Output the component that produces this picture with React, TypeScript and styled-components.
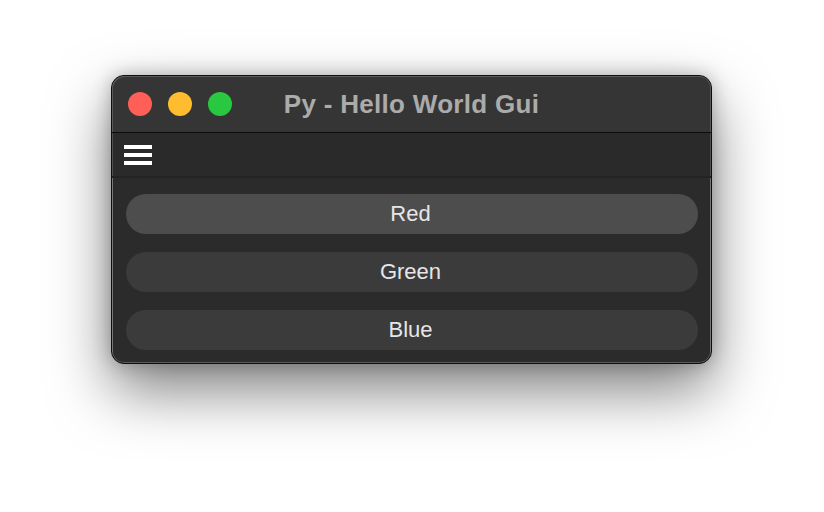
import React from "react";
import styled, { createGlobalStyle } from "styled-components";

const Global = createGlobalStyle`
  html, body { margin: 0; padding: 0; background: #ffffff; }
  body { font-family: "Liberation Sans", Arial, sans-serif; }
`;

const Page = styled.div`
  width: 824px;
  height: 512px;
  display: flex;
  justify-content: flex-start;
  align-items: flex-start;
  padding: 75px 0 0 111px;
  box-sizing: border-box;
  overflow: hidden;
`;

const Window = styled.div`
  width: 601px;
  height: 289px;
  box-sizing: border-box;
  border: 1px solid #0e0e0e;
  border-radius: 13px;
  background: #2b2b2b;
  overflow: hidden;
  display: flex;
  flex-direction: column;
  box-shadow: inset 0 0 0 1px rgba(255, 255, 255, 0.22), 0 26px 60px rgba(0, 0, 0, 0.5),
    0 0 18px rgba(0, 0, 0, 0.25);
`;

const TitleBar = styled.div`
  position: relative;
  height: 56px;
  flex: none;
  background: #353535;
  border-bottom: 1px solid #0c0c0c;
  display: flex;
  align-items: center;
  justify-content: center;
  border-radius: 12px 12px 0 0;
  box-shadow: inset 1px 1px 0 rgba(255, 255, 255, 0.18), inset -1px 0 0 rgba(255, 255, 255, 0.18);
`;

const Lights = styled.div`
  position: absolute;
  left: 16px;
  top: 16px;
  display: flex;
  gap: 16px;
`;

const Light = styled.span<{ $c: string }>`
  width: 24px;
  height: 24px;
  border-radius: 50%;
  background: ${(p) => p.$c};
`;

const Title = styled.div`
  font-size: 26px;
  font-weight: bold;
  color: #ababab;
  letter-spacing: 0.3px;
  padding-top: 1px;
`;

const Toolbar = styled.div`
  height: 43px;
  flex: none;
  background: #2a2a2a;
  border-bottom: 2px solid #232323;
  display: flex;
  align-items: center;
  padding-left: 12px;
  box-shadow: inset 1px 0 0 rgba(255, 255, 255, 0.18), inset -1px 0 0 rgba(255, 255, 255, 0.18);
`;

const Burger = styled.div`
  width: 28px;
  display: flex;
  flex-direction: column;
  gap: 4px;
  & > span {
    height: 4px;
    background: #ffffff;
  }
`;

const Content = styled.div`
  flex: 1;
  display: flex;
  flex-direction: column;
  gap: 18px;
  padding: 16px 13px 0 14px;
  box-shadow: inset 1px 0 0 rgba(255, 255, 255, 0.18), inset -1px 0 0 rgba(255, 255, 255, 0.18);
`;

const Button = styled.button<{ $active?: boolean }>`
  height: 40px;
  border: none;
  border-radius: 20px;
  background: ${(p) => (p.$active ? "#4d4d4d" : "#3b3b3b")};
  color: #e6e6e6;
  font-family: "Liberation Sans", Arial, sans-serif;
  font-size: 22px;
  padding: 0 3px 0 0;
  cursor: pointer;
`;

export default function App() {
  return (
    <>
      <Global />
      <Page>
        <Window>
          <TitleBar>
            <Lights>
              <Light $c="#fe5f57" />
              <Light $c="#febc2e" />
              <Light $c="#28c840" />
            </Lights>
            <Title>Py - Hello World Gui</Title>
          </TitleBar>
          <Toolbar>
            <Burger>
              <span />
              <span />
              <span />
            </Burger>
          </Toolbar>
          <Content>
            <Button $active>Red</Button>
            <Button>Green</Button>
            <Button>Blue</Button>
          </Content>
        </Window>
      </Page>
    </>
  );
}
